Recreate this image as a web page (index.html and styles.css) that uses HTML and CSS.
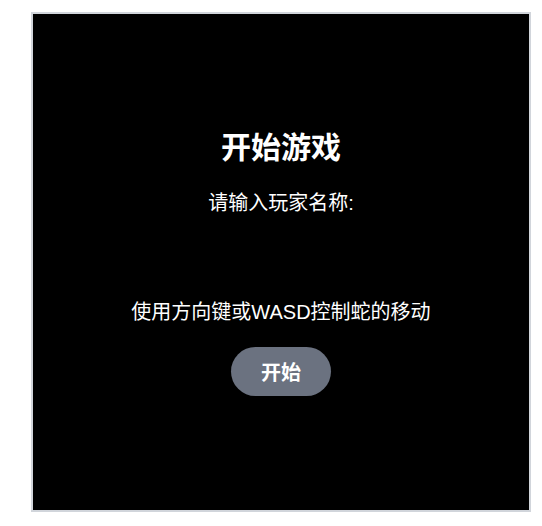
FILE: index.html
```html
<!DOCTYPE html>
<html lang="zh-CN">
<head>
<meta charset="utf-8">
<title>贪吃蛇</title>
<link rel="stylesheet" href="styles.css">
</head>
<body>
<div class="page">
  <div class="game">
    <div class="start-screen">
      <h1 class="title">开始游戏</h1>
      <p class="label">请输入玩家名称:</p>
      <input class="name-input" type="text">
      <p class="hint">使用方向键或WASD控制蛇的移动</p>
      <button class="start-btn">开始</button>
    </div>
  </div>
</div>
</body>
</html>
```

FILE: styles.css
```css
html, body {
  margin: 0;
  padding: 0;
  background: #ffffff;
}
body {
  font-family: "Liberation Sans", "Noto Sans CJK SC", sans-serif;
}
.page {
  padding: 12px 0 0 31px;
}
.game {
  box-sizing: border-box;
  width: 500px;
  height: 500px;
  border: 2px solid #d1d5db;
  background: #000000;
  display: flex;
  align-items: center;
  justify-content: center;
}
.start-screen {
  display: flex;
  flex-direction: column;
  align-items: center;
  color: #ffffff;
  margin-top: 2px;
}
.title {
  margin: 0 0 25px;
  font-size: 30px;
  line-height: 36px;
  font-weight: bold;
}
.label {
  margin: 0;
  font-size: 20px;
  line-height: 24px;
}
.name-input {
  margin: 22px 0 23px;
  height: 40px;
  width: 200px;
  background: #000000;
  border: none;
  outline: none;
  color: #ffffff;
  padding: 0;
}
.hint {
  margin: 0;
  font-size: 20px;
  line-height: 24px;
}
.start-btn {
  margin-top: 23px;
  width: 100px;
  height: 49px;
  border: none;
  border-radius: 25px;
  background: #6b7280;
  color: #ffffff;
  font-family: inherit;
  font-size: 20px;
  font-weight: bold;
  padding: 0;
}
```
